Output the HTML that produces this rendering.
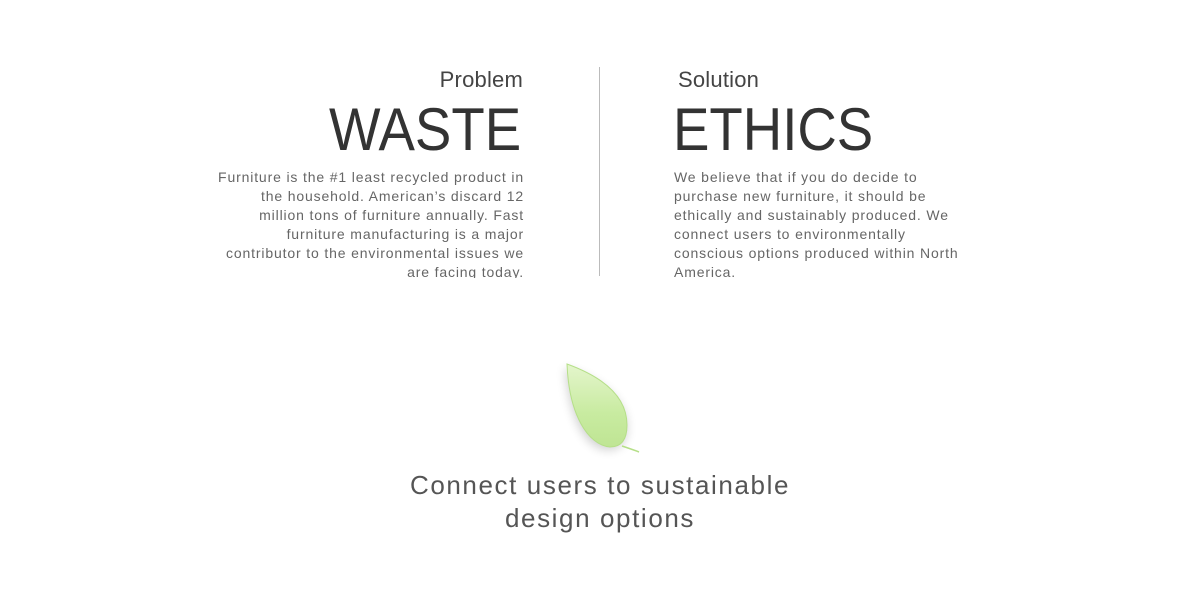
<!DOCTYPE html>
<html><head><style>
html,body{margin:0;padding:0;background:#fff;width:1200px;height:600px;overflow:hidden;font-family:"Liberation Sans",sans-serif;}
.a{position:absolute;white-space:nowrap;}
.lbl{font-size:22px;color:#444;letter-spacing:0.2px;}
.big{font-size:60px;color:#333;line-height:64px;transform:scaleX(0.91);}
.body{font-size:14px;line-height:19px;color:#666;letter-spacing:0.85px;overflow:hidden;height:110px;white-space:normal;}
</style></head><body>
<div class="a lbl" style="right:677px;top:67px;">Problem</div>
<div class="a big" style="right:679px;top:98px;transform-origin:right;">WASTE</div>
<div class="a body" style="right:676px;top:168px;width:360px;text-align:right;">Furniture is the #1 least recycled product in<br>the household. American’s discard 12<br>million tons of furniture annually. Fast<br>furniture manufacturing is a major<br>contributor to the environmental issues we<br>are facing today.</div>
<div class="a" style="left:599px;top:67px;width:1px;height:209px;background:#bbb;"></div>
<div class="a lbl" style="left:678px;top:67px;">Solution</div>
<div class="a big" style="left:673px;top:98px;transform-origin:left;">ETHICS</div>
<div class="a body" style="left:674px;top:168px;width:360px;">We believe that if you do decide to<br>purchase new furniture, it should be<br>ethically and sustainably produced. We<br>connect users to environmentally<br>conscious options produced within North<br>America.</div>
<svg class="a" style="left:540px;top:350px" width="120" height="120" viewBox="540 350 120 120">
<defs><linearGradient id="g" x1="0" y1="0" x2="0" y2="1"><stop offset="0" stop-color="#e4f5cc"/><stop offset="0.6" stop-color="#c8eba0"/><stop offset="1" stop-color="#bfe594"/></linearGradient>
<filter id="s" x="-50%" y="-50%" width="200%" height="200%"><feGaussianBlur stdDeviation="5"/></filter></defs>
<path d="M565 368 C600 380 628 400 627 430 C626 445 618 450 607 450 C585 448 570 420 565 368Z" fill="#000" opacity="0.18" filter="url(#s)"/>
<path d="M567 364 C600 376 627 395 627 425 C627 440 621 447 610 447 C588 445 569 415 567 364Z" fill="url(#g)" stroke="#b5df88" stroke-width="1"/>
<path d="M622 446 C628 448 634 450 639 452" stroke="#b5df88" stroke-width="1.5" fill="none"/>
</svg>
<div class="a" style="left:0;width:1200px;top:469px;text-align:center;font-size:26px;line-height:33px;color:#555;letter-spacing:1.6px;white-space:normal;">Connect users to sustainable<br>design options</div>
</body></html>
